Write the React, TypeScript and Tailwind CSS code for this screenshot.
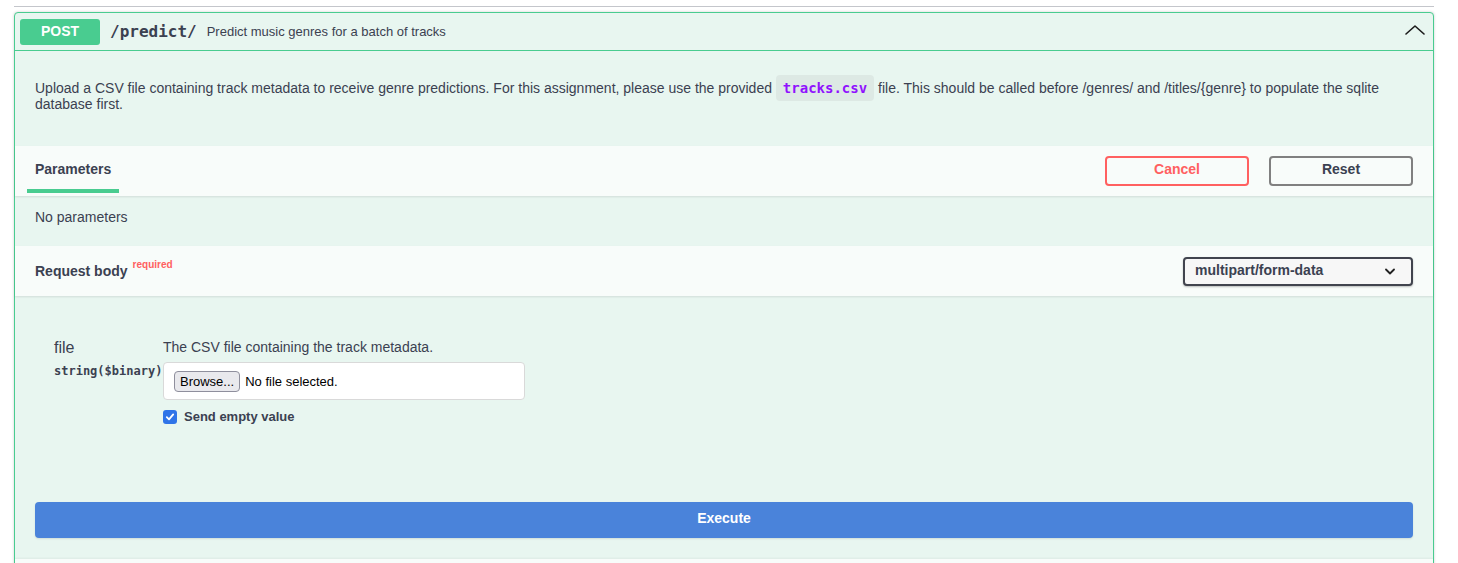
import React from "react";

const sans = { fontFamily: '"Liberation Sans", Arial, sans-serif' };
const mono = { fontFamily: '"DejaVu Sans Mono", "Liberation Mono", monospace' };

function ChevronUp() {
  return (
    <svg width="20" height="20" viewBox="0 0 20 20" fill="none">
      <path d="M1 12 L10 4 L19 12" stroke="#1b1b1b" strokeWidth="1.6" strokeLinecap="round" strokeLinejoin="round" />
    </svg>
  );
}

function ChevronDown() {
  return (
    <svg width="10" height="7" viewBox="0 0 10 7" fill="none">
      <path d="M1 1.5 L5 5.5 L9 1.5" stroke="#222" strokeWidth="1.8" strokeLinecap="round" strokeLinejoin="round" />
    </svg>
  );
}

export default function App() {
  return (
    <div className="h-[563px] overflow-hidden bg-white text-[#3b4151]" style={sans}>
      <div className="pt-[6px] pl-[14px]">
        <div className="w-[1420px] h-px bg-[#c4c6cb]" />

        {/* opblock */}
        <div className="mt-[5px] w-[1420px] border border-[#49cc90] rounded-[4px] bg-[#e8f6f0] shadow-[0_0_3px_rgba(0,0,0,0.19)]">
          {/* summary */}
          <div className="flex items-center h-[38px] px-[5px] border-b border-[#49cc90]">
            <div className="w-[80px] h-[26px] rounded-[3px] bg-[#49cc90] text-white text-[14px] font-bold flex items-center justify-center">
              POST
            </div>
            <span className="ml-[10px] pr-[10px] text-[16px] font-bold text-[#3b4151]" style={mono}>
              /predict/
            </span>
            <span className="text-[13px] text-[#3b4151]">Predict music genres for a batch of tracks</span>
            <div className="ml-auto mr-[3px] flex items-center">
              <ChevronUp />
            </div>
          </div>

          {/* description */}
          <div className="pt-[29px] pb-[34px] px-[20px]">
            <p className="text-[14px] leading-[16px]">
              Upload a CSV file containing track metadata to receive genre predictions. For this assignment, please use the provided{" "}
              <code className="px-[7px] py-[5px] rounded-[4px] bg-[#dde9e4] text-[#9012fe] text-[14px] font-bold" style={mono}>
                tracks.csv
              </code>{" "}
              file. This should be called before /genres/ and /titles/{"{genre}"} to populate the sqlite database first.
            </p>
          </div>

          {/* parameters header */}
          <div className="flex items-start justify-between h-[50px] pl-[12px] pr-[20px] bg-[#f8fcfa] shadow-[0_1px_2px_rgba(0,0,0,0.1)]">
            <div className="w-fit pt-[13px]">
              <div className="px-[8px] text-[14px] leading-[20px] font-bold">Parameters</div>
              <div className="mt-[10px] h-[4px] bg-[#49cc90]" />
            </div>
            <div className="flex gap-[20px] mt-[10px]">
              <button className="w-[144px] h-[30px] border-2 border-[#ff6060] rounded-[4px] text-[#ff6060] text-[14px] leading-[16px] font-bold bg-transparent pb-[4px]">
                Cancel
              </button>
              <button className="w-[144px] h-[30px] border-2 border-[#808080] rounded-[4px] text-[#3b4151] text-[14px] leading-[16px] font-bold bg-transparent pb-[4px]">
                Reset
              </button>
            </div>
          </div>

          {/* no parameters */}
          <div className="h-[50px] px-[20px] pt-[13px] text-[14px] leading-[16px]">No parameters</div>

          {/* request body header */}
          <div className="flex items-center justify-between h-[50px] pl-[20px] pr-[20px] bg-[#f8fcfa] shadow-[0_1px_2px_rgba(0,0,0,0.1)]">
            <div className="flex items-start">
              <span className="text-[14px] font-bold leading-[16px]">Request body</span>
              <span className="ml-[5px] text-[10px] font-bold text-[#ff6060] leading-[12px] -mt-[4px]">required</span>
            </div>
            <div className="flex items-center justify-between w-[230px] h-[29px] border-2 border-[#41444e] rounded-[4px] bg-[#f7f7f7] pl-[10px] pr-[16px] shadow-[0_1px_2px_rgba(0,0,0,0.25)]">
              <span className="text-[14px] leading-[16px] font-bold pb-[2px]">multipart/form-data</span>
              <ChevronDown />
            </div>
          </div>

          {/* body */}
          <div className="pt-[43px] pb-[21px]">
            <div className="flex pl-[39px]">
              <div className="w-[109px]">
                <div className="text-[16px] leading-[18px]">file</div>
                <div className="mt-[6px] text-[12px] leading-[16px] font-bold text-[#3b4151]" style={mono}>
                  string($binary)
                </div>
              </div>
              <div>
                <div className="text-[14px] leading-[16px]">The CSV file containing the track metadata.</div>
                <div className="mt-[7px] w-[362px] h-[38px] bg-white border border-[#d9d9d9] rounded-[4px] flex items-center pl-[10px]">
                  <div className="h-[21px] px-[5px] bg-[#e9e9ed] border border-[#8f8f9d] rounded-[4px] text-[13px] leading-[15px] text-black flex items-center">
                    Browse...
                  </div>
                  <span className="ml-[5px] text-[13px] leading-[15px] text-black">No file selected.</span>
                </div>
                <div className="mt-[10px] h-[14px] flex items-center">
                  <div className="w-[14px] h-[14px] rounded-[3px] bg-[#2f74e8] flex items-center justify-center">
                    <svg width="10" height="10" viewBox="0 0 10 10" fill="none">
                      <path d="M1.8 5.2 L4 7.4 L8.2 2.4" stroke="white" strokeWidth="1.8" strokeLinecap="round" strokeLinejoin="round" />
                    </svg>
                  </div>
                  <span className="ml-[7px] text-[13px] leading-[14px] font-bold">Send empty value</span>
                </div>
              </div>
            </div>

            <div className="px-[20px] mt-[78px]">
              <button className="w-full h-[36px] rounded-[4px] bg-[#4a83da] text-white text-[14px] leading-[16px] font-bold pb-[4px] shadow-[0_1px_2px_rgba(0,0,0,0.1)]">
                Execute
              </button>
            </div>
          </div>

          {/* responses header (cut off) */}
          <div className="h-[50px] bg-[#f8fcfa] shadow-[0_-1px_2px_rgba(0,0,0,0.05)]" />
        </div>
      </div>
    </div>
  );
}
